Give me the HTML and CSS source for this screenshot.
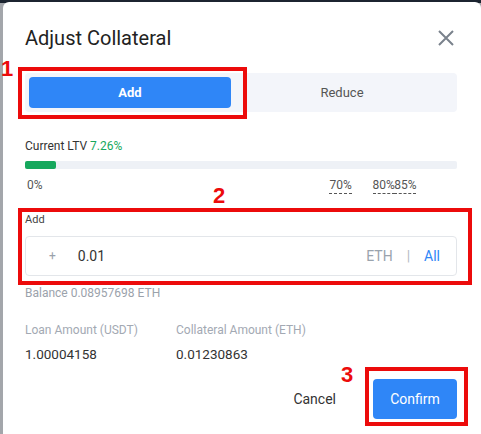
FILE: index.html
```html
<!doctype html>
<html>
  <head>
    <title>Adjust Collateral</title>
    <link rel="stylesheet" href="styles.css">
  </head>
  <body>
    <div id="modal">
      <div class="header">
        <h1>Adjust Collateral</h1>
        <svg class="close" width="18" height="18" viewBox="0 0 18 18">
          <path d="M2 2 L16 16 M16 2 L2 16" stroke="#7a828c" stroke-width="2" fill="none"/>
        </svg>
      </div>

      <div class="tabs">
        <button class="tab active">Add</button>
        <button class="tab">Reduce</button>
      </div>

      <div class="ltv">Current LTV <span class="green">7.26%</span></div>
      <div class="bar"><div class="fill" style="width: 7.26%"></div></div>
      <div class="marks">
        <span class="mark plain" style="left: 0%">0%</span>
        <span class="mark" style="left: 70%">70%</span>
        <span class="mark" style="left: 80%">80%</span>
        <span class="mark" style="left: 85%">85%</span>
      </div>

      <div class="label">Add</div>
      <div class="input">
        <span class="plus">+</span>
        <span class="value">0.01</span>
        <span class="unit">ETH</span>
        <span class="sep">|</span>
        <span class="all">All</span>
      </div>
      <div class="balance">Balance 0.08957698 ETH</div>

      <div class="amounts">
        <div class="col">
          <div class="small">Loan Amount (USDT)</div>
          <div class="num">1.00004158</div>
        </div>
        <div class="col">
          <div class="small">Collateral Amount (ETH)</div>
          <div class="num">0.01230863</div>
        </div>
      </div>

      <div class="footer">
        <button id="cancel">Cancel</button>
        <button id="confirm">Confirm</button>
      </div>
    </div>

    <!-- red annotations -->
    <div class="note box1"></div>
    <div class="note box2"></div>
    <div class="note box3"></div>
    <div class="step n1">1</div>
    <div class="step n2">2</div>
    <div class="step n3">3</div>
  </body>
</html>
```

FILE: styles.css
```css
body {
  margin: 0;
  background: linear-gradient(#1c2430 0 3px, #a3a6ab 3px);
  font-family: Roboto, "Liberation Sans", sans-serif;
  color: #333;
  height: 434px;
  overflow: hidden;
}

#modal {
  margin: 2px 0 0 3px;
  background-color: #fff;
  border-radius: 6px 6px 0 0;
  padding: 22px 24px 0 22px;
  height: 432px;
  box-sizing: border-box;
}

.header {
  display: flex;
  justify-content: space-between;
  align-items: center;
  height: 28px;
}
.header h1 {
  margin: 0;
  font-size: 20px;
  font-weight: 400;
  color: #222;
}
.close {
  margin-right: 2px;
}

.tabs {
  margin-top: 21px;
  display: grid;
  grid-template-columns: 202px 1fr;
  background-color: #f3f5fa;
  border-radius: 4px;
  padding: 4px;
}
.tab {
  height: 31px;
  border: none;
  background: none;
  font-family: inherit;
  font-size: 13px;
  color: #555;
  border-radius: 4px;
}
.tab.active {
  background-color: #2f86f7;
  color: #fff;
  font-weight: 700;
}

.ltv {
  margin-top: 26px;
  font-size: 12px;
  line-height: 16px;
}
.green {
  color: #16a85d;
}

.bar {
  margin-top: 7px;
  height: 8px;
  background-color: #eef1f6;
  border-radius: 2px;
}
.fill {
  height: 8px;
  background-color: #16a85d;
  border-radius: 2px;
}

.marks {
  margin-top: 9px;
  position: relative;
  height: 16px;
}
.mark {
  position: absolute;
  top: 0;
  margin-left: 2px;
  font-size: 12px;
  line-height: 15px;
  color: #555;
  border-bottom: 1px dashed #555;
}
.mark.plain {
  border-bottom: none;
}

.label {
  margin-top: 19px;
  font-size: 11px;
  line-height: 14px;
  color: #444;
}

.input {
  margin-top: 9px;
  height: 40px;
  box-sizing: border-box;
  border: 1px solid #e3e6ea;
  border-radius: 4px;
  display: flex;
  align-items: center;
  padding: 0 16px 0 23px;
  font-size: 14px;
}
.plus {
  color: #9aa1aa;
  font-size: 12px;
}
.value {
  margin-left: 22px;
  flex: 1;
  color: #333;
}
.unit {
  color: #9aa3ad;
}
.sep {
  color: #b5bbc3;
  margin: 0 14px;
}
.all {
  color: #2f86f7;
}

.balance {
  margin-top: 10px;
  font-size: 12px;
  line-height: 14px;
  color: #9ba2ab;
}

.amounts {
  margin-top: 22px;
  display: grid;
  grid-template-columns: 151px 1fr;
}
.small {
  font-size: 12px;
  line-height: 16px;
  color: #a3a9b3;
}
.num {
  margin-top: 8px;
  font-size: 13.5px;
  line-height: 16px;
  color: #333;
}

.footer {
  margin-top: 17px;
  display: flex;
  justify-content: flex-end;
  gap: 20px;
}
.footer button {
  height: 40px;
  border: none;
  font-family: inherit;
  font-size: 14px;
  border-radius: 4px;
}
#cancel {
  background: none;
  color: #333;
  padding: 0 17px;
}
#confirm {
  width: 84px;
  background-color: #2f86f7;
  color: #fff;
}

.note {
  position: absolute;
  border: 4px solid #ec0b0b;
  box-sizing: border-box;
}
.box1 {
  left: 18px;
  top: 67px;
  width: 229px;
  height: 52px;
}
.box2 {
  left: 18px;
  top: 208px;
  width: 454px;
  height: 77px;
}
.box3 {
  left: 365px;
  top: 367px;
  width: 103px;
  height: 59px;
}

.step {
  position: absolute;
  font-family: "Liberation Sans", sans-serif;
  font-weight: 700;
  font-size: 22px;
  line-height: 22px;
  color: #ec0b0b;
}
.n1 {
  left: 1px;
  top: 58px;
}
.n2 {
  left: 213px;
  top: 185px;
}
.n3 {
  left: 341px;
  top: 364px;
}
```
